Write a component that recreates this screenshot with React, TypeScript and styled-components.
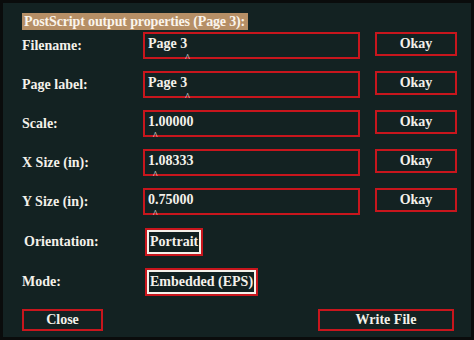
import styled, { createGlobalStyle } from 'styled-components'

const GlobalStyle = createGlobalStyle`
  html, body {
    margin: 0;
    padding: 0;
    background: #0b0d0d;
  }
  * { box-sizing: border-box; }
`

const serif = `"Liberation Serif", "Times New Roman", serif`

const Frame = styled.div`
  width: 474px;
  height: 340px;
  border: 3px solid #0a0c0c;
  background: #132222;
  padding: 10px 17px 0 19px;
  font-family: ${serif};
  font-weight: bold;
  color: #f4f1ea;
  display: flex;
  flex-direction: column;
`

const Title = styled.div`
  align-self: flex-start;
  background: #b68f66;
  color: #fbf5ec;
  font-size: 14px;
  letter-spacing: -0.15px;
  line-height: 17px;
  height: 17px;
  padding: 0 3px 0 2px;
`

const Rows = styled.div`
  margin-top: 2px;
  display: grid;
  grid-template-columns: 121px 217px 97px;
  grid-auto-rows: 39px;
`

const Label = styled.div<{ $indent?: number }>`
  font-size: 14px;
  height: 27px;
  display: flex;
  align-items: center;
  padding-left: ${p => p.$indent ?? 0}px;
`

const Field = styled.div`
  height: 27px;
  border: 2px solid #c8161d;
  padding: 2px 0 0 3px;
  font-size: 14px;
  line-height: 15px;
  white-space: pre;
`

const Caret = styled.span`
  position: relative;
  display: inline-block;
  width: 0;
  &::after {
    content: '^';
    position: absolute;
    left: -2px;
    top: 2px;
    font-size: 10px;
    font-weight: normal;
  }
`

const Okay = styled.button`
  justify-self: end;
  width: 82px;
  height: 24px;
  border: 2px solid #c8161d;
  background: transparent;
  color: #f4f1ea;
  font: bold 14px ${serif};
  padding: 0;
`

const OptionRow = styled.div<{ $gap: number }>`
  display: grid;
  grid-template-columns: 123px auto;
  align-items: center;
  height: 28px;
  margin-top: ${p => p.$gap}px;
`

const Choice = styled.button`
  justify-self: start;
  height: 28px;
  border: 2px solid #c8161d;
  box-shadow: inset 0 0 0 2px #f4f1ea;
  background: #122020;
  color: #f4f1ea;
  font: bold 14px ${serif};
  padding: 0 3px;
`

const Footer = styled.div`
  display: flex;
  justify-content: space-between;
  margin-top: 13px;
`

const FooterButton = styled.button<{ $w: number }>`
  width: ${p => p.$w}px;
  height: 22px;
  border: 2px solid #c8161d;
  background: transparent;
  color: #f4f1ea;
  font: bold 14px ${serif};
  padding: 0;
`

const fields: { label: string; before: string; after: string }[] = [
  { label: 'Filename:', before: 'Page 3', after: '' },
  { label: 'Page label:', before: 'Page 3', after: '' },
  { label: 'Scale:', before: '1', after: '.00000' },
  { label: 'X Size (in):', before: '1', after: '.08333' },
  { label: 'Y Size (in):', before: '0', after: '.75000' },
]

export default function App() {
  return (
    <>
      <GlobalStyle />
      <Frame>
        <Title>PostScript output properties (Page 3):</Title>
        <Rows>
          {fields.map(f => (
            <>
              <Label key={f.label + 'l'}>{f.label}</Label>
              <Field key={f.label + 'f'}>
                {f.before}
                <Caret />
                {f.after}
              </Field>
              <Okay key={f.label + 'b'}>Okay</Okay>
            </>
          ))}
        </Rows>
        <OptionRow $gap={1}>
          <Label $indent={2}>Orientation:</Label>
          <Choice>Portrait</Choice>
        </OptionRow>
        <OptionRow $gap={12}>
          <Label>Mode:</Label>
          <Choice>Embedded (EPS)</Choice>
        </OptionRow>
        <Footer>
          <FooterButton $w={81}>Close</FooterButton>
          <FooterButton $w={136}>Write File</FooterButton>
        </Footer>
      </Frame>
    </>
  )
}
